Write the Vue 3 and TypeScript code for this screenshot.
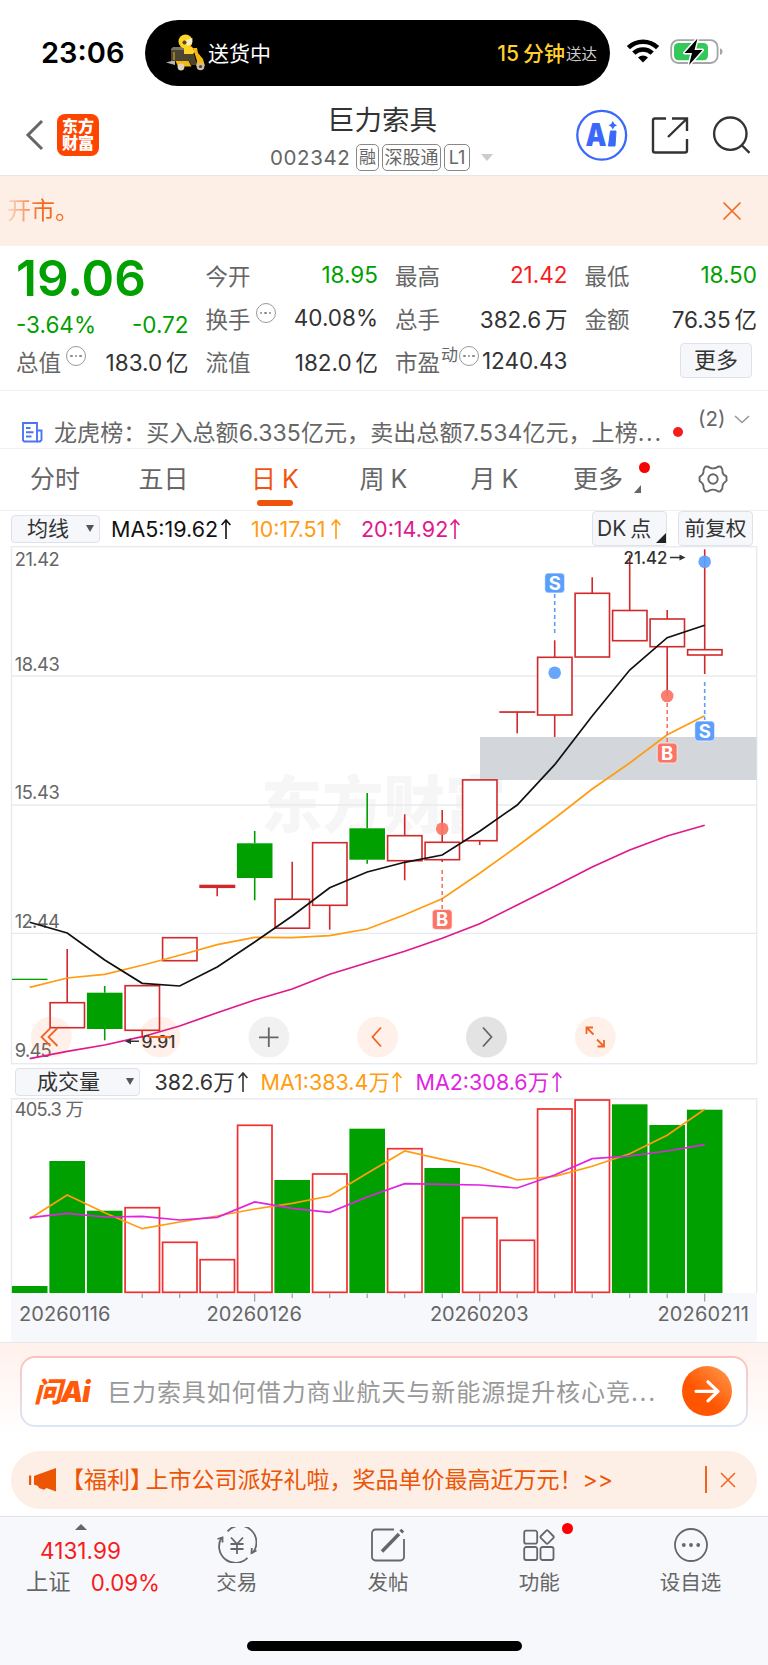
<script setup lang="ts">
interface Candle {
  up: boolean
  high: number
  top: number
  bottom: number
  low: number
}

interface Cell {
  label: string
  value: string
  tone: string
  info?: boolean
  sup?: string
}

const cx = (i: number): number => 29.7 + 37.5 * i

const candle = (up: boolean, high: number, top: number, bottom: number, low: number): Candle => ({ up, high, top, bottom, low })

const candles: Candle[] = [
  candle(false, 979, 978.7, 980, 980),
  candle(true, 949, 1002.7, 1027.7, 1027.7),
  candle(false, 986, 992.7, 1029, 1040.3),
  candle(true, 985.7, 985.7, 1030.3, 1038),
  candle(true, 937.7, 937.7, 960.7, 960.7),
  candle(true, 885.5, 885.5, 887.3, 896.3),
  candle(false, 831, 843.3, 878, 900.3),
  candle(true, 861.7, 899.3, 928.2, 928.2),
  candle(true, 842.7, 842.7, 905.3, 929.7),
  candle(false, 793, 828.3, 859.7, 863.7),
  candle(true, 814.3, 835.7, 860.7, 880.3),
  candle(true, 810, 842.3, 859.7, 862),
  candle(true, 779.9, 779.9, 840.7, 845),
  candle(true, 712, 712, 712.1, 733.3),
  candle(true, 640.3, 657.3, 715, 737),
  candle(true, 577.3, 593.3, 657, 657),
  candle(true, 555, 610.5, 640.7, 640.7),
  candle(true, 610, 619, 646.7, 696),
  candle(true, 549.3, 649.7, 655, 674),
]

const ma5 = [922.3, 933, 960, 983.3, 986, 967, 942, 916, 887.7, 872, 862.3, 855, 831.3, 805, 764.7, 716, 670, 637.7, 625.3]
const ma10 = [987.3, 978, 974.3, 965.3, 955.3, 944.7, 937.3, 937.7, 935.7, 929, 914.7, 898.7, 873.3, 846.3, 818.3, 789, 763, 734.7, 715.7]
const ma20 = [1058.7, 1051.3, 1045, 1036.7, 1026, 1012.7, 1000, 989, 974.3, 962.7, 951.3, 938.3, 923.7, 905, 886.3, 867, 850, 836, 825.3]

const volTop = [1286, 1161, 1210.7, 1207.7, 1242.3, 1259.7, 1125.3, 1180, 1174, 1128.7, 1148.7, 1168, 1217.7, 1240.3, 1109, 1100, 1104.3, 1125, 1109.7]
const volGreen = [0, 1, 2, 7, 9, 11, 16, 17, 18]
const volMa1 = [1218.7, 1195, 1212.7, 1228.7, 1222, 1216, 1209, 1203.3, 1196, 1173.3, 1151, 1159.3, 1167, 1180, 1176.3, 1166.3, 1153.7, 1135.3, 1109.3]
const volMa2 = [1217.7, 1213.3, 1217, 1216.3, 1220, 1217.3, 1202, 1208.3, 1212.3, 1197, 1183.7, 1184.3, 1185, 1188, 1175, 1158.7, 1156, 1151, 1144.7]

const line = (ys: number[]): string => ys.map((y, i) => `${cx(i)},${y}`).join(' ')

const ticks = Array.from({ length: 16 }, (_, k) => k + 3)

const priceLabels = [
  { y: 566, t: '21.42', w: 45 },
  { y: 670.5, t: '18.43', w: 45 },
  { y: 799.3, t: '15.43', w: 45 },
  { y: 928.3, t: '12.44', w: 45 },
  { y: 1057, t: '9.45', w: 37 },
]

const dates = [
  { x: 19, t: '20260116', w: 91.5 },
  { x: 206.5, t: '20260126', w: 95.5 },
  { x: 430, t: '20260203', w: 98.5 },
  { x: 657.5, t: '20260211', w: 91.5 },
]

const signals = [
  { i: 14, kind: 'S', box: 583, dot: 672.7, from: 594, to: 633 },
  { i: 17, kind: 'B', box: 753, dot: 696, from: 703, to: 742 },
  { i: 18, kind: 'S', box: 731, dot: 561.7, from: 682, to: 720 },
  { i: 11, kind: 'B', box: 919.5, dot: 828.7, from: 870, to: 909 },
]

const columns: Cell[][] = [
  [
    { label: '今开', value: '18.95', tone: 'green' },
    { label: '换手', value: '40.08%', tone: 'ink', info: true },
    { label: '流值', value: '182.0 亿', tone: 'ink' },
  ],
  [
    { label: '最高', value: '21.42', tone: 'red' },
    { label: '总手', value: '382.6 万', tone: 'ink' },
    { label: '市盈', value: '1240.43', tone: 'ink', info: true, sup: '动' },
  ],
  [
    { label: '最低', value: '18.50', tone: 'green' },
    { label: '金额', value: '76.35 亿', tone: 'ink' },
  ],
]

const tabs = ['分时', '五日', '日 K', '周 K', '月 K', '更多']
</script>

<template>
  <div class="screen">
    <header class="status">
      <span class="clock">23:06</span>
      <div class="island">
        <svg class="rider" width="40" height="38" viewBox="0 0 40 38">
          <path d="M0 28.500l9-2.500v5z" fill="#b9b4ac" />
          <path d="M5 15h13v12H5z" fill="#4b4536" />
          <path d="M5 15l2-2h11v3H5z" fill="#7c735e" />
          <path d="M8 18v8" stroke="#d5a51b" stroke-width="1.200" />
          <path d="M9.500 27h13l3 5.500H12z" fill="#f2b90f" />
          <path d="M18 12.500h8l3 5.500-3 3h-8z" fill="#ffd32a" />
          <path d="M17 20h11l3 11h-6l-2-4h-6z" fill="#4d442f" />
          <path d="M27 14h4l1 5 5 6 2 7h-9l1-5z" fill="#f6b713" />
          <circle cx="15" cy="33" r="3.400" fill="#ddd3bd" />
          <circle cx="34.500" cy="32.500" r="3.800" fill="#c8bfab" />
          <circle cx="34.500" cy="32.500" r="1.600" fill="#4b4330" />
          <circle cx="19.500" cy="7.500" r="7" fill="#ffd51f" />
          <path d="M20 6l6.500-2-1 6-4.500 2z" fill="#f7eccb" />
          <circle cx="18.500" cy="8.500" r="2" fill="#54452b" />
        </svg>
        <span class="isl-left">送货中</span>
        <span class="isl-time">15 分钟</span><span class="isl-sub">送达</span>
      </div>
      <svg class="wifi" width="34" height="26" viewBox="0 0 34 26">
        <g fill="none" stroke="#000" stroke-width="4.600">
          <path d="M2.400 9.600a21 21 0 0 1 29.200 0" />
          <path d="M7.800 15.200a13.200 13.200 0 0 1 18.400 0" />
        </g>
        <path d="M17 24.500l-5-5a7.200 7.200 0 0 1 10 0z" />
      </svg>
      <svg class="battery" width="56" height="30" viewBox="0 0 56 30">
        <rect x="1.200" y="4.200" width="46.400" height="22.800" rx="7" fill="#fff" stroke="#a5a5a8" stroke-width="1.800" />
        <rect x="4" y="7" width="34" height="17.300" rx="4.500" fill="#34c759" />
        <path d="M50 12.200q2.600 1 2.600 3.400t-2.600 3.400z" fill="#a5a5a8" />
        <path d="M27.500 2.500L14.500 17h7.500l-3 12L32.500 14h-8z" fill="#000" stroke="#fff" stroke-width="3" paint-order="stroke" stroke-linejoin="round" />
      </svg>
    </header>

    <nav class="nav">
      <svg class="back" width="20" height="34" viewBox="0 0 20 34"><path d="M17 3L3 17l14 14" fill="none" stroke="#666" stroke-width="3" /></svg>
      <div class="logo"><span>东方</span><span>财富</span></div>
      <div class="title">
        <div class="name">巨力索具</div>
        <div class="codes">
          <span class="code">002342</span>
          <span class="tag t1">融</span><span class="tag t2">深股通</span><span class="tag t3">L1</span>
          <svg width="12" height="7" viewBox="0 0 12 7"><path d="M0 0h12L6 7z" fill="#ccc" /></svg>
        </div>
      </div>
      <svg class="tools" width="180" height="56" viewBox="574 107 180 56">
        <circle cx="601.700" cy="135.300" r="24.400" fill="none" stroke="#3b68fa" stroke-width="2.300" />
        <text x="585.500" y="145.700" class="ai" textLength="21" lengthAdjust="spacingAndGlyphs">A</text>
        <path d="M610.500 131h5.500l-1 15h-6.500z" fill="#3b68fa" stroke="#3b68fa" stroke-linejoin="round" />
        <path d="M612.800 121q1 3.300 4.300 4.300-3.300 1-4.300 4.300-1-3.300-4.300-4.300 3.300-1 4.300-4.300z" fill="#3b68fa" />
        <g fill="none" stroke="#333" stroke-width="2.400">
          <path d="M666 118.500h-11a2 2 0 0 0-2 2v30a2 2 0 0 0 2 2h30a2 2 0 0 0 2-2V139" />
          <path d="M672 118.500h15V131M686 119.500L668 137" />
          <circle cx="730.300" cy="133.700" r="16.200" />
          <path d="M741.500 145l8 7.800" />
        </g>
      </svg>
    </nav>

    <section class="notice">
      <span class="notice-text">开市。</span>
      <svg width="20" height="20" viewBox="0 0 20 20"><path d="M1.500 1.500l17 17M18.500 1.500l-17 17" stroke="#f26a20" stroke-width="1.700" /></svg>
    </section>

    <section class="quote">
      <div class="col first">
        <div class="price">19.06</div>
        <div class="row change green"><span>-3.64%</span><span>-0.72</span></div>
        <div class="row">
          <span class="label">总值<i class="info"><b></b><b></b><b></b></i></span>
          <span class="ink">183.0 亿</span>
        </div>
      </div>
      <div v-for="(col, c) in columns" :key="c" class="col">
        <div v-for="cell in col" :key="cell.label" class="row">
          <span class="label">{{ cell.label }}<em v-if="cell.sup">{{ cell.sup }}</em><i v-if="cell.info" class="info" :class="{ tight: cell.sup }"><b></b><b></b><b></b></i></span>
          <span :class="cell.tone">{{ cell.value }}</span>
        </div>
        <div v-if="c === 2" class="row end"><button class="chip more">更多</button></div>
      </div>
    </section>

    <section class="news">
      <svg class="news-icon" width="22" height="21" viewBox="0 0 22 21">
        <g fill="none" stroke="#4c74f5" stroke-width="1.900">
          <path d="M1 1h14v18.500H2.200L1 18.300z" />
          <path d="M15 8.500h4.500v9.500l-1.500 1.500H15M4 6h4.500M4 10.200h7.500M4 14.500h5.500" />
        </g>
      </svg>
      <span class="news-text">龙虎榜：买入总额6.335亿元，卖出总额7.534亿元，上榜<span class="dots">...</span></span>
      <span class="news-dot"></span>
      <span class="news-count">(2)</span>
      <svg class="news-more" width="16" height="10" viewBox="0 0 16 10"><path d="M1 1l7 6.500L15 1" fill="none" stroke="#999" stroke-width="1.600" /></svg>
    </section>

    <section class="tabs">
      <div v-for="(t, i) in tabs" :key="t" class="tab" :class="{ on: i === 2 }">
        <span>{{ t }}</span>
        <template v-if="i === 5">
          <span class="tab-dot"></span>
          <svg class="tab-corner" width="7" height="8" viewBox="0 0 7 8"><path d="M7 0v8H0z" fill="#666" /></svg>
        </template>
      </div>
      <div class="gear">
        <svg width="30" height="30" viewBox="-15 -15 30 30">
          <g fill="none" stroke="#666" stroke-width="1.900" stroke-linejoin="round">
            <path d="M-7.800 -12.300Q-5.500 -12.900 -3.500 -11.400Q0 -9.800 3.500 -11.400Q5.500 -12.900 7.800 -12.300L9.300 -9.600Q9.200 -6.200 10.600 -4.400L13.400 -2.600L13.600 1.600L10.600 4.400Q9.200 6.200 9.300 9.600L7.300 12.400Q5.500 12.900 3.500 11.400Q0 9.800 -3.500 11.400Q-5.500 12.900 -7.800 12.300L-9.300 9.600Q-9.200 6.200 -10.600 4.400L-13.400 2L-13.400 -2L-10.600 -4.400Q-9.200 -6.200 -9.300 -9.600Z" />
            <circle r="4.700" />
          </g>
        </svg>
      </div>
    </section>

    <section class="mabar">
      <button class="chip pick p1">均线<svg width="8" height="7" viewBox="0 0 8 7"><path d="M0 0h8L4 7z" fill="#555" /></svg></button>
      <span class="m m1">MA5:19.62</span><svg class="up u1" width="10" height="20" viewBox="0 0 10 20"><path d="M5 20V1M.6 6L5 1l4.400 5" /></svg>
      <span class="m m2">10:17.51</span><svg class="up u2" width="10" height="20" viewBox="0 0 10 20"><path d="M5 20V1M.6 6L5 1l4.400 5" /></svg>
      <span class="m m3">20:14.92</span><svg class="up u3" width="10" height="20" viewBox="0 0 10 20"><path d="M5 20V1M.6 6L5 1l4.400 5" /></svg>
      <button class="chip dk">DK 点<svg width="10" height="10" viewBox="0 0 10 10"><path d="M10 0v10H0z" fill="#222" /></svg></button>
      <button class="chip fq">前复权</button>
    </section>

    <svg class="kline" width="768" height="519" viewBox="0 546 768 519">
      <text x="261" y="828" class="water" textLength="245" lengthAdjust="spacingAndGlyphs">东方财富</text>
      <g stroke="#e8eaf0" stroke-width="1.400" fill="none">
        <rect x="11.500" y="546.700" width="745.200" height="517" />
        <path d="M12 676h745M12 805h745M12 933.400h745" />
      </g>
      <rect x="480" y="737" width="276.700" height="43" fill="#d3d6db" />
      <g v-for="(k, i) in candles" :key="i" :stroke="k.up ? '#d1282b' : '#00a000'" stroke-width="1.600">
        <path v-if="k.high < k.top" :d="`M${cx(i)} ${k.high}V${k.top}`" />
        <path v-if="k.low > k.bottom" :d="`M${cx(i)} ${k.bottom}V${k.low}`" />
        <rect v-if="k.up" :x="cx(i) - 17.100" :y="k.top" width="34.400" :height="k.bottom - k.top" :fill="i === 5 ? '#d1282b' : '#fff'" />
        <rect v-else :x="cx(i) - 17.800" :y="k.top" width="35.600" :height="k.bottom - k.top" fill="#00a000" stroke="none" />
      </g>
      <g class="labels"><text v-for="p in priceLabels" :key="p.t" x="14.700" :y="p.y" :textLength="p.w">{{ p.t }}</text></g>
      <polyline :points="line(ma20)" fill="none" stroke="#e0188c" stroke-width="1.700" />
      <polyline :points="line(ma10)" fill="none" stroke="#ff9c0f" stroke-width="1.700" />
      <polyline :points="line(ma5)" fill="none" stroke="#111" stroke-width="1.700" />
      <g v-for="s in signals" :key="s.box" :fill="s.kind === 'S' ? '#5b9ffb' : '#fb7566'">
        <path :d="`M${cx(s.i)} ${s.from}V${s.to}`" :stroke="s.kind === 'S' ? '#5b9ffb' : '#fb7566'" stroke-width="1.600" stroke-dasharray="4 3" />
        <circle :cx="cx(s.i)" :cy="s.dot" r="6.300" fill-opacity=".93" />
        <rect :x="cx(s.i) - 9.900" :y="s.box - 9.900" width="19.800" height="19.800" rx="3.500" stroke="#fff" stroke-opacity=".6" />
        <text :x="cx(s.i)" :y="s.box + 6.800" class="sig">{{ s.kind }}</text>
      </g>
      <g class="notes">
        <text x="623.500" y="563.500" textLength="44" lengthAdjust="spacingAndGlyphs">21.42</text>
        <text x="141.500" y="1047.700" textLength="34" lengthAdjust="spacingAndGlyphs">9.91</text>
        <path d="M670 557.500h13M139 1041.300h-12" stroke="#333" stroke-width="1.500" />
        <path d="M685.500 557.500l-6-3v6zM125 1041.300l6-3v6z" />
      </g>
      <g>
        <circle v-for="n in 6" :key="n" :cx="51.300 + (n - 1) * 108.800" cy="1037" r="20.500" :fill="n === 3 ? '#0000000e' : n === 5 ? '#0000001c' : '#ff5a1417'" />
      </g>
      <g fill="none" stroke="#f26422" stroke-width="1.800">
        <path d="M50.500 1028l-9 9 9 9M57.500 1028l-9 9 9 9M149 1037h21.500M381 1027.500l-8.500 9.500 8.500 9.500" />
        <path d="M586.500 1034v-6.500h6.500M587 1028l6.500 6.500M604 1040v6.500h-6.500M603.500 1046l-6.500-6.500" />
      </g>
      <path d="M259 1037.300h19.500M268.800 1027.500v19.500M483 1027.500l8.500 9.500-8.500 9.500" fill="none" stroke="#666" stroke-width="1.800" />
    </svg>

    <section class="volbar">
      <button class="chip pick p2">成交量<svg width="8" height="7" viewBox="0 0 8 7"><path d="M0 0h8L4 7z" fill="#555" /></svg></button>
      <span class="m v1">382.6万</span><svg class="up w1" width="10" height="20" viewBox="0 0 10 20"><path d="M5 20V1M.6 6L5 1l4.400 5" /></svg>
      <span class="m v2">MA1:383.4万</span><svg class="up w2" width="10" height="20" viewBox="0 0 10 20"><path d="M5 20V1M.6 6L5 1l4.400 5" /></svg>
      <span class="m v3">MA2:308.6万</span><svg class="up w3" width="10" height="20" viewBox="0 0 10 20"><path d="M5 20V1M.6 6L5 1l4.400 5" /></svg>
    </section>

    <svg class="volume" width="768" height="244" viewBox="0 1098 768 244">
      <rect x="11" y="1293" width="746" height="49" fill="#f7f8fb" />
      <path d="M11.500 1293V1098.700H756.700V1293" fill="none" stroke="#e8eaf0" stroke-width="1.400" />
      <g v-for="(y, i) in volTop" :key="i">
        <rect v-if="volGreen.includes(i)" :x="cx(i) - 17.800" :y="y" width="35.600" :height="1293 - y" fill="#00a000" />
        <rect v-else :x="cx(i) - 17.100" :y="y" width="34.400" :height="1292.300 - y" fill="#fff" stroke="#f03030" stroke-width="1.700" />
      </g>
      <polyline :points="line(volMa1)" fill="none" stroke="#ff9c0f" stroke-width="1.700" />
      <polyline :points="line(volMa2)" fill="none" stroke="#df25df" stroke-width="1.700" />
      <path v-for="t in ticks" :key="t" :d="`M${cx(t)} 1293.500v${t % 6 === 0 ? 8 : 4.500}`" stroke="#999" stroke-width="1.200" />
      <g class="labels">
        <text x="14.700" y="1116.300" textLength="69">405.3 万</text>
        <text v-for="d in dates" :key="d.t" class="date" :x="d.x" y="1321.300" :textLength="d.w">{{ d.t }}</text>
      </g>
    </svg>

    <section class="ask">
      <div class="ask-box">
        <span class="ask-logo">问Ai</span>
        <span class="ask-text">巨力索具如何借力商业航天与新能源提升核心竞<span class="dots">...</span></span>
        <svg class="ask-go" width="50" height="50" viewBox="0 0 50 50">
          <defs><linearGradient id="go" x1=".2" y1=".8" x2=".85" y2=".1"><stop offset=".3" stop-color="#ff5500" /><stop offset="1" stop-color="#ff8f40" /></linearGradient></defs>
          <circle cx="25" cy="25" r="25" fill="url(#go)" />
          <path d="M14 25.300h22M26 15.800l10 9.500-10 9.500" fill="none" stroke="#fff" stroke-width="3.200" stroke-linecap="round" stroke-linejoin="round" />
        </svg>
      </div>
    </section>

    <section class="promo">
      <svg class="horn" width="28" height="24" viewBox="0 0 28 24"><path d="M0 7.500h2.200v9.500H0zM5 8l4-1.500L27 0v23.500l-9.500-3.500-2.500 1.800-5-1.800-1-2-4-1.500z" fill="#ec5504" /></svg>
      <span class="promo-text">【福利<span class="close-mark">】</span>上市公司派好礼啦，奖品单价最高近万元！<span>&gt;&gt;</span></span>
      <span class="promo-sep"></span>
      <svg width="16" height="16" viewBox="0 0 16 16"><path d="M1 1l14 14M15 1L1 15" stroke="#f0641e" stroke-width="1.500" /></svg>
    </section>

    <footer class="bottom">
      <div class="index">
        <svg width="12" height="6" viewBox="0 0 12 6"><path d="M0 6h12L6 0z" fill="#666" /></svg>
        <div class="idx-val">4131.99</div>
        <div class="idx-row"><span>上证</span><b>0.09%</b></div>
      </div>
      <div class="item">
        <svg width="40" height="36" viewBox="-20 -18 40 36">
          <g fill="none" stroke="#666" stroke-width="1.800">
            <path d="M-9.500 -13.700A16.500 16.500 0 0 1 15.300 8.200M10.500 12.800A16.500 16.500 0 0 1 -15.500 -7.200" />
            <path d="M-19.500 -6l5-1.500v5M19.500 5.500l-5 2.500.3-5" />
            <path d="M-6 -7.500L0 -1 6 -7.500M0 -1v10M-6.500 -1h13M-6.500 4h13" />
          </g>
        </svg>
        <span>交易</span>
      </div>
      <div class="item">
        <svg width="40" height="36" viewBox="-20 -18 40 36">
          <g fill="none" stroke="#666" stroke-width="1.800">
            <path d="M6 -15.500h-18.500a3.500 3.500 0 0 0-3.500 3.500v24a3.500 3.500 0 0 0 3.500 3.500h25a3.500 3.500 0 0 0 3.500-3.500V-6" />
            <path d="M-6 6.500L11 -11" stroke-width="3.400" /><path d="M12.800 -12.800l2-2" stroke-width="4" />
          </g>
        </svg>
        <span>发帖</span>
      </div>
      <div class="item">
        <svg width="40" height="36" viewBox="-20 -18 40 36">
          <g fill="none" stroke="#666" stroke-width="1.800">
            <rect x="-14.800" y="-14.300" width="13" height="13" rx="2" /><rect x="-14.800" y="2" width="13" height="13" rx="2" /><rect x="1.500" y="2" width="13" height="13" rx="2" />
            <rect x="3" y="-13" width="10.200" height="10.200" rx="1.200" transform="rotate(45 8.100 -7.900)" />
          </g>
        </svg>
        <i class="item-dot"></i>
        <span>功能</span>
      </div>
      <div class="item">
        <svg width="40" height="36" viewBox="-20 -18 40 36">
          <circle r="16" fill="none" stroke="#666" stroke-width="1.800" />
          <g fill="#666"><circle cx="-7.200" r="1.900" /><circle r="1.900" /><circle cx="7.200" r="1.900" /></g>
        </svg>
        <span>设自选</span>
      </div>
      <div class="home"></div>
    </footer>
  </div>
</template>

<style>
body {
  background: #fff;
}
</style>

<style scoped>
.screen {
  width: 768px;
  height: 1665px;
  overflow: hidden;
  display: flex;
  flex-direction: column;
  font-family: Inter, "Noto Sans CJK SC", sans-serif;
  font-weight: 400;
  color: #333;
  background: #fff;
  white-space: nowrap;
}
.screen > * {
  flex: none;
  box-sizing: border-box;
}
svg {
  display: block;
  flex: none;
}
button {
  font: inherit;
  padding: 0;
}
.green { color: #00a000; }
.red { color: #f71c1c; }
.ink { color: #333; }

.status {
  height: 96px;
  display: flex;
  align-items: flex-start;
}
.clock {
  width: 104px;
  margin-left: 41px;
  margin-top: 34px;
  font-size: 29px;
  line-height: 38px;
  font-weight: 600;
  color: #000;
}
.island {
  width: 465px;
  height: 66px;
  margin-top: 20px;
  border-radius: 33px;
  background: #000;
  color: #fff;
  display: flex;
  align-items: center;
}
.rider { margin-left: 21px; }
.isl-left { font-size: 21px; margin: -2px auto 0 2px; }
.isl-time { font-size: 21px; font-weight: 500; color: #ffd02e; word-spacing: -1.500px; margin-top: -2px; }
.isl-sub { font-size: 15.500px; color: #ccc; margin-left: 1px; margin-right: 13px; }
.wifi { margin: 38px 0 0 16px; }
.battery { margin: 36px 0 0 10px; }

.nav {
  height: 80px;
  border-bottom: 1px solid #e5e6ea;
  display: flex;
}
.back { margin: 22px 0 0 25px; }
.logo {
  width: 42px;
  height: 42px;
  margin: 18px 0 0 12px;
  border-radius: 8px;
  background: #ff4400;
  color: #fff;
  font-size: 16px;
  font-weight: 900;
  line-height: 17.500px;
  display: flex;
  flex-direction: column;
  justify-content: center;
  align-items: center;
}
.title { margin-left: 171px; width: 282px; }
.name {
  font-size: 27.500px;
  line-height: 38px;
  margin-top: 5px;
  padding-left: 57px;
}
.codes {
  display: flex;
  align-items: center;
  height: 27px;
  margin-top: 5px;
  color: #666;
}
.code { font-size: 20.500px; letter-spacing: .6px; width: 86px; }
.tag {
  box-sizing: border-box;
  height: 27px;
  line-height: 25px;
  border: 1.500px solid #888;
  border-radius: 5px;
  font-size: 18px;
  text-align: center;
}
.t1 { width: 23px; font-size: 17px; margin-right: 3px; }
.t2 { width: 59px; margin-right: 3px; }
.t3 { width: 26px; margin-right: 11px; }
.tools { margin-left: 22px; margin-top: 11px; }
.ai { font-weight: 900; font-size: 31px; fill: #3b68fa; }

.notice {
  height: 70px;
  background: #fdeee6;
  display: flex;
  align-items: center;
  justify-content: space-between;
  padding: 0 26px 0 7px;
}
.notice-text {
  margin-top: -5px;
  font-size: 24px;
  background: linear-gradient(90deg, #fdd8c4, #f26a20 34px);
  -webkit-background-clip: text;
  background-clip: text;
  color: transparent;
}

.quote {
  height: 145px;
  padding: 7px 0 0 16px;
  display: grid;
  grid-template-columns: repeat(4, 172.500px);
  column-gap: 17px;
  border-bottom: 1px solid #f2f2f4;
  font-size: 22.500px;
  word-spacing: -2.500px;
}
.row {
  height: 43px;
  display: flex;
  align-items: center;
  justify-content: space-between;
}
.price {
  height: 51px;
  line-height: 51px;
  font-size: 49.500px;
  font-weight: 600;
  color: #00a000;
}
.change { height: 35px; padding-top: 6px; box-sizing: border-box; }
.label { color: #666; display: flex; align-items: center; }
.label em { font-style: normal; font-size: 17px; margin: -14px 0 0 1px; }
.info {
  box-sizing: border-box;
  width: 20px;
  height: 20px;
  border: 1.600px solid #999;
  border-radius: 50%;
  margin: -9px 0 0 5px;
  display: flex;
  align-items: center;
  justify-content: center;
  gap: 2px;
}
.info.tight { margin-left: 1px; }
.info b { width: 2.500px; height: 2.500px; border-radius: 50%; background: #888; }
.end { justify-content: flex-end; }
.chip {
  box-sizing: border-box;
  border: 1px solid #dfe2e8;
  border-radius: 4px;
  background: #f6f7fa;
  color: #333;
}
.more { width: 72px; height: 35px; margin: -1px 5px 0 0; font-size: 22px; line-height: 31px; }

.news {
  height: 58px;
  display: flex;
  align-items: center;
  border-bottom: 1px solid #f2f2f4;
  color: #666;
}
.news-icon { margin: 26px 0 0 22px; }
.news-text { width: 610px; margin: 22px 0 0 10px; font-size: 23px; letter-spacing: .08px; }
.dots { letter-spacing: 1.700px; }
.news-dot { width: 10.500px; height: 10.500px; border-radius: 50%; background: #f61d1d; margin: 25px 0 0 8.500px; }
.news-count { font-size: 20.500px; margin: -2px 0 0 15px; }
.news-more { margin: 0 0 0 9px; }

.tabs {
  height: 62px;
  display: grid;
  grid-template-columns: 110px 107px 116px 101px 121px 86px 127px;
  border-bottom: 1px solid #efeff2;
  font-size: 25px;
  word-spacing: -1px;
  color: #666;
}
.tab {
  position: relative;
  display: flex;
  justify-content: center;
  line-height: 60px;
}
.on { color: #f25410; }
.on::after {
  content: "";
  position: absolute;
  left: 40px;
  bottom: 4.500px;
  width: 36px;
  height: 5.500px;
  border-radius: 3px;
  background: #ee5309;
}
.tab-dot { position: absolute; left: 83.500px; top: 13px; width: 11px; height: 11px; border-radius: 50%; background: #fa0000; }
.tab-corner { position: absolute; left: 78.500px; top: 36px; }
.gear { display: flex; align-items: center; padding-left: 57px; margin-top: -1px; }

.mabar, .volbar { display: flex; align-items: center; }
.mabar { height: 35px; }
.volbar { height: 33px; }
.pick { height: 28px; font-size: 21px; line-height: 26px; display: flex; align-items: center; justify-content: space-between; padding-right: 5px; }
.p1 { width: 89px; margin-left: 11px; padding-left: 15px; }
.p2 { width: 125px; margin-left: 15px; padding-left: 21px; }
.m { font-size: 21.500px; flex: none; }
.up { fill: none; stroke: currentColor; stroke-width: 1.600; }
.m1 { width: 110px; margin-left: 11px; color: #111; }
.u1 { color: #111; }
.m2 { width: 80px; margin-left: 20px; color: #ff9c0f; }
.u2 { color: #ff9c0f; }
.m3 { width: 89px; margin-left: 20px; color: #e0188c; }
.u3 { color: #e0188c; margin-right: auto; }
.dk { width: 75px; height: 35px; font-size: 21px; padding-left: 4px; display: flex; align-items: center; line-height: 33px; word-spacing: -2px; }
.dk svg { margin: 18px 0 0 5px; }
.fq { width: 75px; height: 35px; font-size: 20.700px; line-height: 33px; margin: 0 15px 0 11px; }
.volbar .m { margin-top: -3px; }
.v1 { width: 83px; margin-left: 14.500px; color: #333; }
.w1 { color: #333; }
.v2 { width: 131px; margin-left: 13px; color: #ff9c0f; }
.w2 { color: #ff9c0f; }
.v3 { width: 136px; margin-left: 14px; color: #df25df; }
.w3 { color: #df25df; }

.water { font-size: 62px; font-weight: 900; fill: #f6f6f7; }
.labels { font-size: 18.300px; fill: #666; }
.date { font-size: 20px; }
.sig { font-size: 18.500px; font-weight: 700; fill: #fff; text-anchor: middle; }
.notes { font-size: 17px; font-weight: 500; fill: #333; }

.ask {
  height: 104px;
  border-top: 1.500px solid #e8e8ec;
  padding: 13px 20px 0;
  background: linear-gradient(#fff1ec, #fff 92px);
}
.ask-box {
  box-sizing: border-box;
  height: 71px;
  border: 2px solid transparent;
  border-radius: 15px;
  background: linear-gradient(#fff, #fff) padding-box, linear-gradient(#fdc3ba, #dce7f8) border-box;
  display: flex;
  align-items: center;
}
.ask-logo {
  width: 60px;
  margin: -3px 0 0 12px;
  font-size: 28px;
  font-weight: 900;
  font-style: italic;
  letter-spacing: -1px;
  color: #ff5a0a;
}
.ask-text { margin: -3px 0 0 13px; font-size: 24px; letter-spacing: .95px; color: #999; width: 574px; }
.ask-go { margin: -1px 0 0 1px; }

.promo {
  height: 58px;
  margin: 4.500px 11px 0;
  border-radius: 29px;
  background: #fdeee6;
  color: #ec5504;
  display: flex;
  align-items: center;
}
.horn { margin-left: 18px; }
.promo-text { width: 638px; margin: -3px 0 0 4px; font-size: 23px; }
.close-mark { letter-spacing: -7.500px; }
.promo-sep { width: 1.500px; height: 27px; background: #f0641e; margin: 0 13px 0 6px; }

.bottom {
  position: relative;
  height: 149px;
  margin-top: 7.500px;
  border-top: 1.500px solid #e2e3e7;
  background: #f7f8fb;
  display: flex;
  color: #666;
}
.index { width: 161px; display: flex; flex-direction: column; align-items: center; padding-top: 7px; }
.idx-val { color: #f71c1c; font-size: 22.600px; line-height: 28px; margin-top: 7px; }
.idx-row { align-self: stretch; display: flex; justify-content: space-between; padding: 0 1px 0 26px; font-size: 22.300px; line-height: 32px; margin-top: 1px; }
.idx-row b { font-weight: 400; color: #f71c1c; padding-top: 1px; }
.item { position: relative; width: 151.300px; display: flex; flex-direction: column; align-items: center; padding-top: 10px; font-size: 20.500px; line-height: 32px; }
.item span { margin-top: 4px; }
.item-dot { position: absolute; left: 98px; top: 6px; width: 11px; height: 11px; border-radius: 50%; background: #fa0000; }
.home { position: absolute; left: 246.500px; top: 124px; width: 275px; height: 9.500px; border-radius: 5px; background: #000; }
</style>
